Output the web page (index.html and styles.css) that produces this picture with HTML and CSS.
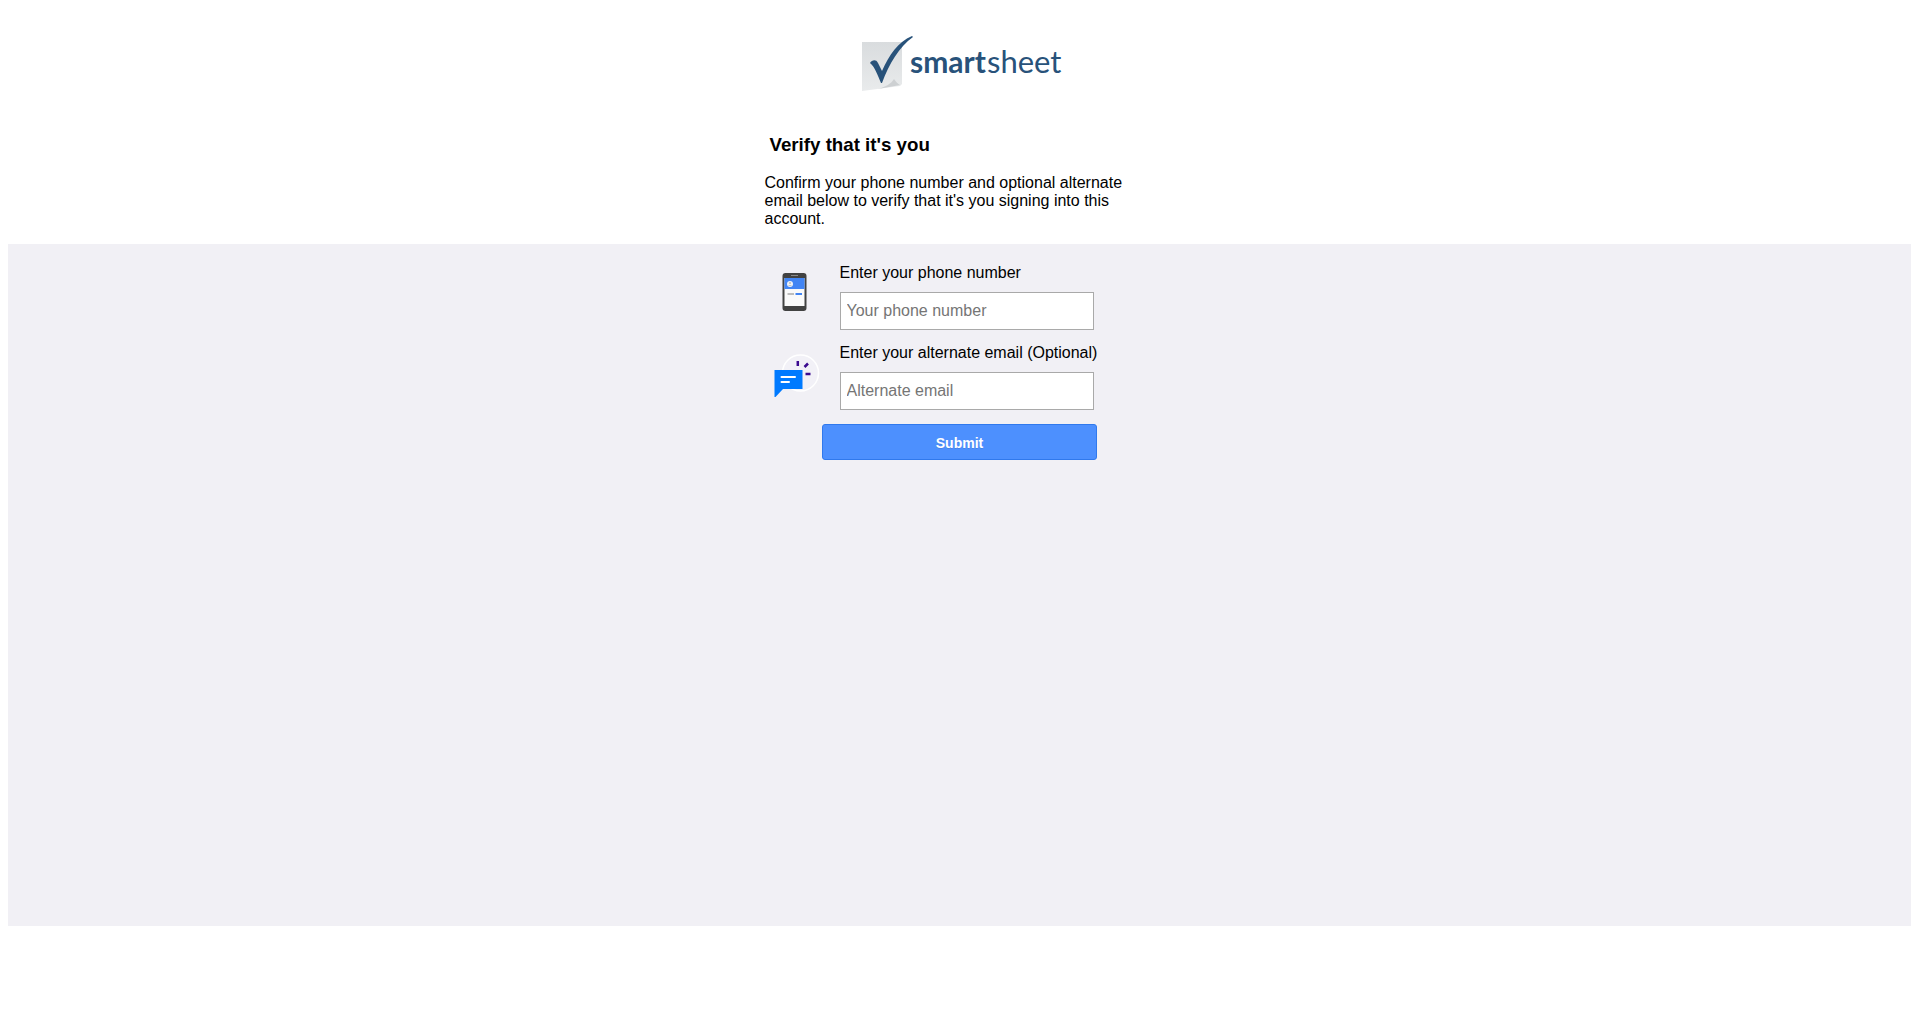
FILE: index.html
```
<!DOCTYPE html>
<html lang="en">
<head>
<meta charset="utf-8">
<title>Smartsheet - Verify that it's you</title>
<meta name="viewport" content="width=device-width, initial-scale=1">
<link rel="stylesheet" href="styles.css">
</head>
<body>
<header class="intro">
  <svg class="logo" viewBox="0 0 204 58" role="img" aria-label="smartsheet">
    <defs>
      <linearGradient id="paper" x1="0" y1="0" x2="0" y2="1">
        <stop offset="0" stop-color="#d9dcde"/>
        <stop offset="1" stop-color="#e9ebec"/>
      </linearGradient>
    </defs>
    <path fill="url(#paper)" d="M4 7H44V49L42 51L4 56Z"/>
    <path fill="#cdd0d2" d="M20 54C27 52 33 49 36 44C38 47 40 49 42 50Z"/>
    <path fill="#28527a" d="M12 28C14 25 18 24 20 28L24 36C31 20 40 7 54 1L55 2C41 12 31 29 24 48H23C20 41 17 32 12 28Z"/>
    <text class="logo-bold" x="52" y="38">smart</text>
    <text class="logo-light" x="129" y="38">sheet</text>
  </svg>
  <div class="column">
    <h3 class="title">Verify that it's you</h3>
    <p class="lead">Confirm your phone number and optional alternate email below to verify that it's you signing into this account.</p>
  </div>
</header>
<main class="panel">
  <form class="column form">
    <div class="row">
      <svg class="icon" viewBox="0 0 60 60" aria-hidden="true">
        <rect x="17.500" y="9" width="24" height="38" rx="3" fill="#424242"/>
        <rect x="26" y="11" width="7" height="1" fill="#8a8a8a"/>
        <rect x="19.500" y="14" width="20" height="28" fill="#fafafa"/>
        <rect x="19.500" y="14" width="20" height="11" fill="#4285f4"/>
        <circle cx="25" cy="20" r="3" fill="#eef2f8"/>
        <circle cx="25" cy="19" r="1" fill="#bdbdbd"/>
        <path d="M23 22Q25 20 27 22Z" fill="#bdbdbd"/>
        <rect x="22.500" y="29" width="6.500" height="2" fill="#bdbdbd"/>
        <rect x="30.500" y="29" width="6.500" height="2" fill="#4285f4"/>
      </svg>
      <div class="field">
        <label for="phone">Enter your phone number</label>
        <input class="input" id="phone" type="tel" placeholder="Your phone number">
      </div>
    </div>
    <div class="row">
      <svg class="icon" viewBox="0 0 60 60" aria-hidden="true">
        <circle cx="35.500" cy="29" r="18" fill="#f2f1f7" stroke="#fff" stroke-width="1.500"/>
        <path fill="#007aff" d="M9.500 26H37.500V45H18L10.500 53H9.500Z"/>
        <path stroke="#fff" stroke-width="2" stroke-linecap="round" d="M16.500 33H30M16.500 38H24"/>
        <path stroke="#3b0a8f" stroke-width="2.500" d="M32.800 17V22M39.500 23L43 19.500M40.500 30H45.500"/>
      </svg>
      <div class="field">
        <label for="email">Enter your alternate email (Optional)</label>
        <input class="input" id="email" type="email" placeholder="Alternate email">
      </div>
    </div>
    <button class="submit" type="submit">Submit</button>
  </form>
</main>
</body>
</html>
```
FILE: styles.css
```
* {
  box-sizing: border-box;
}

body {
  margin: 0;
  padding: 35px 5px 0 8px;
  background: #fff;
  color: #000;
  font: 16px/18px "Liberation Sans", Arial, sans-serif;
}

.logo {
  display: block;
  width: 204px;
  height: 58px;
  margin: 0 auto 41px;
}

.logo-bold,
.logo-light {
  fill: #28527a;
  font-family: Lato, sans-serif;
  font-size: 31px;
}

.logo-bold {
  font-size: 30px;
  font-weight: 700;
}

.column {
  width: 100%;
  max-width: 390px;
  margin: 0 auto;
}

.title {
  margin: 0 0 18px;
  padding-left: 5px;
  line-height: 22px;
}

.lead {
  margin: 0 0 16px;
}

.panel {
  min-height: 682px;
  padding-top: 20px;
  background: #f1f0f5;
}

.form {
  display: flex;
  flex-direction: column;
  gap: 14px;
}

.row {
  display: flex;
  gap: 15px;
}

.icon {
  flex: none;
  width: 60px;
  height: 60px;
}

.field {
  display: flex;
  flex-direction: column;
  gap: 10px;
}

.input {
  width: 254px;
  height: 38px;
  padding: 0 6px;
  border: 1px solid #a9a9a9;
  background: #fff;
  font: inherit;
}

.input::placeholder {
  color: #757575;
}

.submit {
  align-self: center;
  width: 275px;
  height: 36px;
  border: 1px solid #3079ed;
  border-radius: 3px;
  background: #4d90fe;
  color: #fff;
  font: bold 14px/34px "Liberation Sans", Arial, sans-serif;
  text-shadow: 0 1px rgba(0, 0, 0, 0.1);
}
```
